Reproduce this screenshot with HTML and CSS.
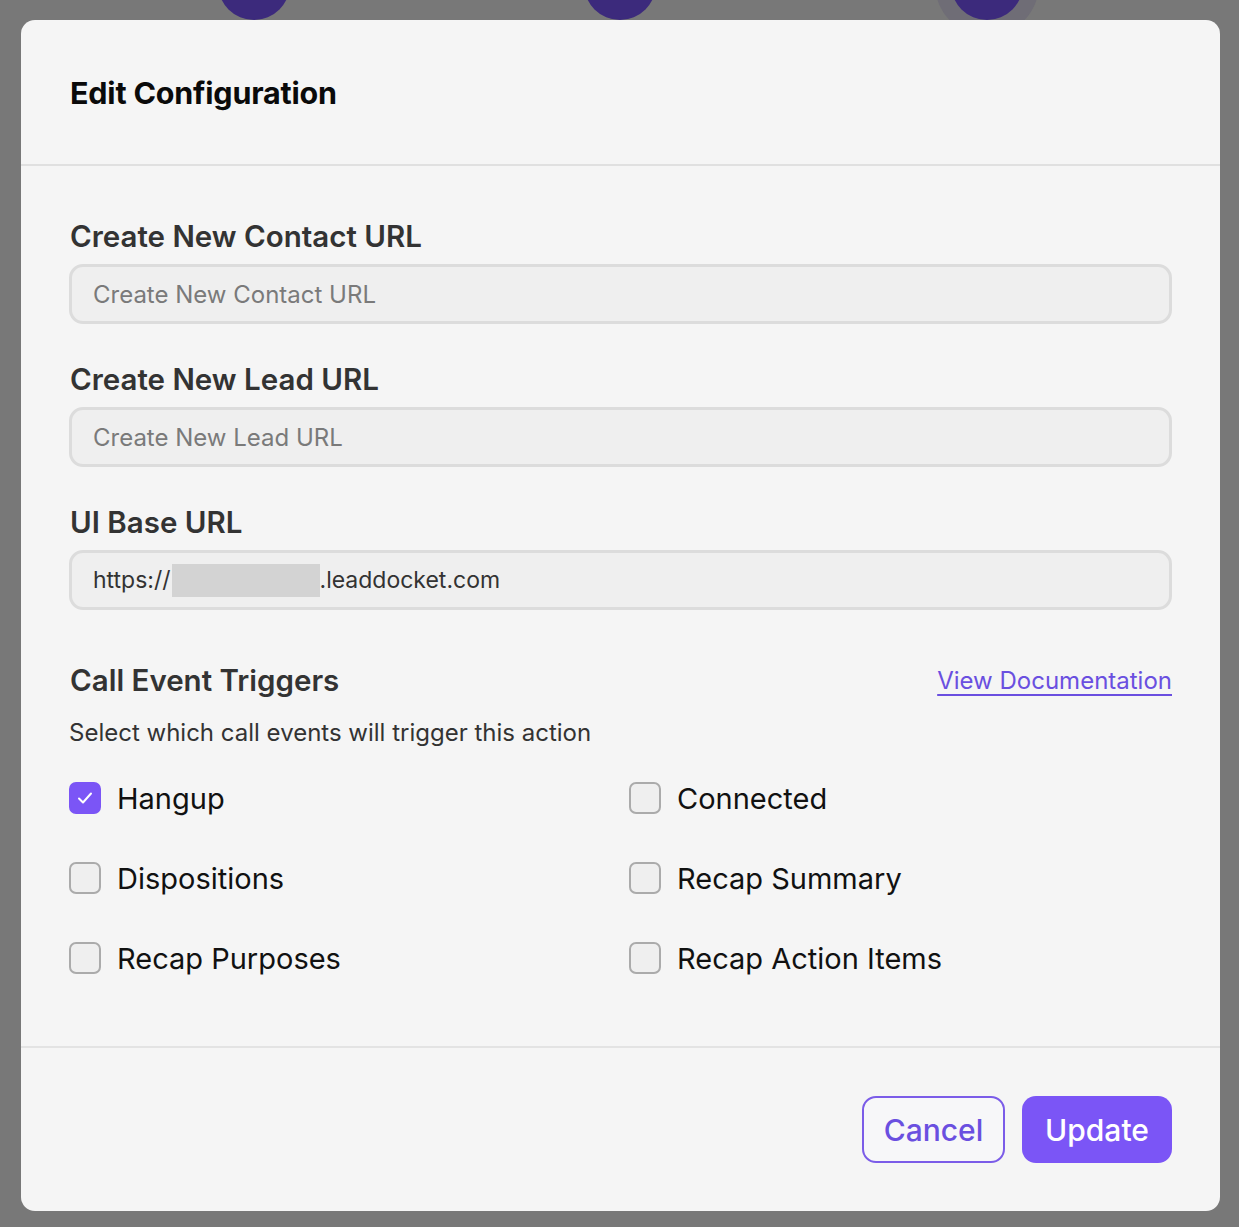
FILE: index.html
```html
<!DOCTYPE html>
<html lang="en">
<head>
<meta charset="utf-8">
<title>Edit Configuration</title>
<link rel="stylesheet" href="styles.css">
</head>
<body>
<div class="backdrop-dots">
  <span class="dot dot-1"></span>
  <span class="dot dot-2"></span>
  <span class="dot dot-3"></span>
</div>
<div class="modal">
  <header class="modal-header">
    <h1 class="modal-title">Edit Configuration</h1>
  </header>
  <main class="modal-body">
    <div class="field">
      <label class="field-label">Create New Contact URL</label>
      <div class="input"><span class="placeholder">Create New Contact URL</span></div>
    </div>
    <div class="field">
      <label class="field-label">Create New Lead URL</label>
      <div class="input"><span class="placeholder">Create New Lead URL</span></div>
    </div>
    <div class="field">
      <label class="field-label">UI Base URL</label>
      <div class="input"><span class="value">https://<span class="redacted"></span>.leaddocket.com</span></div>
    </div>
    <section class="triggers">
      <div class="triggers-head">
        <h2 class="triggers-title">Call Event Triggers</h2>
        <a class="doc-link" href="#">View Documentation</a>
      </div>
      <p class="triggers-sub">Select which call events will trigger this action</p>
      <div class="check-grid">
        <label class="check"><span class="box checked"><svg viewBox="0 0 32 32" width="32" height="32"><path d="M10 16.5l4 4 8-9" fill="none" stroke="#fff" stroke-width="2" stroke-linecap="round" stroke-linejoin="round"/></svg></span>Hangup</label>
        <label class="check"><span class="box"></span>Connected</label>
        <label class="check"><span class="box"></span>Dispositions</label>
        <label class="check"><span class="box"></span>Recap Summary</label>
        <label class="check"><span class="box"></span>Recap Purposes</label>
        <label class="check"><span class="box"></span>Recap Action Items</label>
      </div>
    </section>
  </main>
  <footer class="modal-footer">
    <button class="btn btn-outline">Cancel</button>
    <button class="btn btn-primary">Update</button>
  </footer>
</div>
</body>
</html>
```
FILE: styles.css
```css
* { box-sizing: border-box; }
html, body { margin: 0; }
body {
  background: #787878;
  font-family: Inter, "Noto Sans", sans-serif;
  padding: 20px 19px 16px 21px;
  position: relative;
  min-height: 1227px;
}
.backdrop-dots { position: absolute; top: 0; left: 0; width: 100%; height: 20px; overflow: hidden; }
.dot { position: absolute; width: 72px; height: 72px; border-radius: 50%; background: #3c2a7c; top: -52px; }
.dot-1 { left: 218px; }
.dot-2 { left: 584px; }
.dot-3 { left: 951px; box-shadow: 0 0 0 16px #6f6d76; }
.modal {
  position: relative;
  background: #f5f5f5;
  border-radius: 14px;
  width: 1199px;
  height: 1191px;
  display: flex;
  flex-direction: column;
}
.modal-header {
  height: 146px;
  padding: 0 48px;
  display: flex;
  align-items: center;
  border-bottom: 2px solid #e0e0e0;
}
.modal-title {
  margin: 0 0 0 1px;
  font-size: 30.5px;
  font-weight: 700;
  color: #0a0a0a;
  letter-spacing: -0.2px;
}
.modal-body {
  flex: 1;
  padding: 53px 48px 0 48px;
  border-bottom: 2px solid #e3e3e3;
}
.field { margin-bottom: 38px; }
.field:nth-child(3) { margin-bottom: 53px; }
.field-label {
  display: block;
  font-size: 29.5px;
  font-weight: 600;
  color: #333;
  line-height: 34px;
  margin-bottom: 11px;
  padding-left: 1px;
}
.input {
  height: 60px;
  border: 3px solid #dcdcdc;
  border-radius: 14px;
  background: #efefef;
  display: flex;
  align-items: center;
  padding-left: 21px;
  font-size: 24px;
}
.placeholder { color: #7a7a7a; }
.value { color: #333; display: inline-flex; align-items: center; font-size: 23px; }
.redacted { display: inline-block; width: 148px; height: 33px; background: #d3d3d3; margin-left: 1px; }
.triggers-head {
  display: flex;
  justify-content: space-between;
  align-items: center;
  height: 34px;
}
.triggers-title {
  margin: 0 0 0 1px;
  font-size: 29.5px;
  font-weight: 600;
  color: #333;
}
.doc-link {
  font-size: 24px;
  color: #6a4fe0;
  text-decoration: underline;
  text-decoration-thickness: 1.5px;
  text-underline-offset: 5px;
}
.triggers-sub {
  margin: 21px 0 0;
  font-size: 24px;
  line-height: 30px;
  color: #333;
}
.check-grid {
  margin-top: 30px;
  display: grid;
  grid-template-columns: 560px 1fr;
  row-gap: 40px;
}
.check {
  display: flex;
  align-items: center;
  height: 40px;
  font-size: 29px;
  color: #111;
  gap: 16px;
}
.box {
  width: 32px;
  height: 32px;
  border: 2px solid #ababab;
  border-radius: 7px;
  background: #efefef;
  flex: none;
}
.box.checked {
  background: #7b55f6;
  border-color: #7b55f6;
  position: relative;
}
.box.checked svg { position: absolute; left: -2px; top: -2px; }
.modal-footer {
  height: 163px;
  display: flex;
  justify-content: flex-end;
  align-items: center;
  gap: 17px;
  padding: 0 48px 0 0;
}
.btn {
  height: 67px;
  border-radius: 14px;
  font-family: Inter, "Noto Sans", sans-serif;
  font-size: 30px;
  font-weight: 500;
  cursor: pointer;
}
.btn-outline {
  width: 143px;
  border: 2px solid #7b5ce8;
  background: #f7f7f9;
  color: #6a4fe0;
}
.btn-primary {
  width: 150px;
  border: none;
  background: #7b55f6;
  color: #fff;
}
```
